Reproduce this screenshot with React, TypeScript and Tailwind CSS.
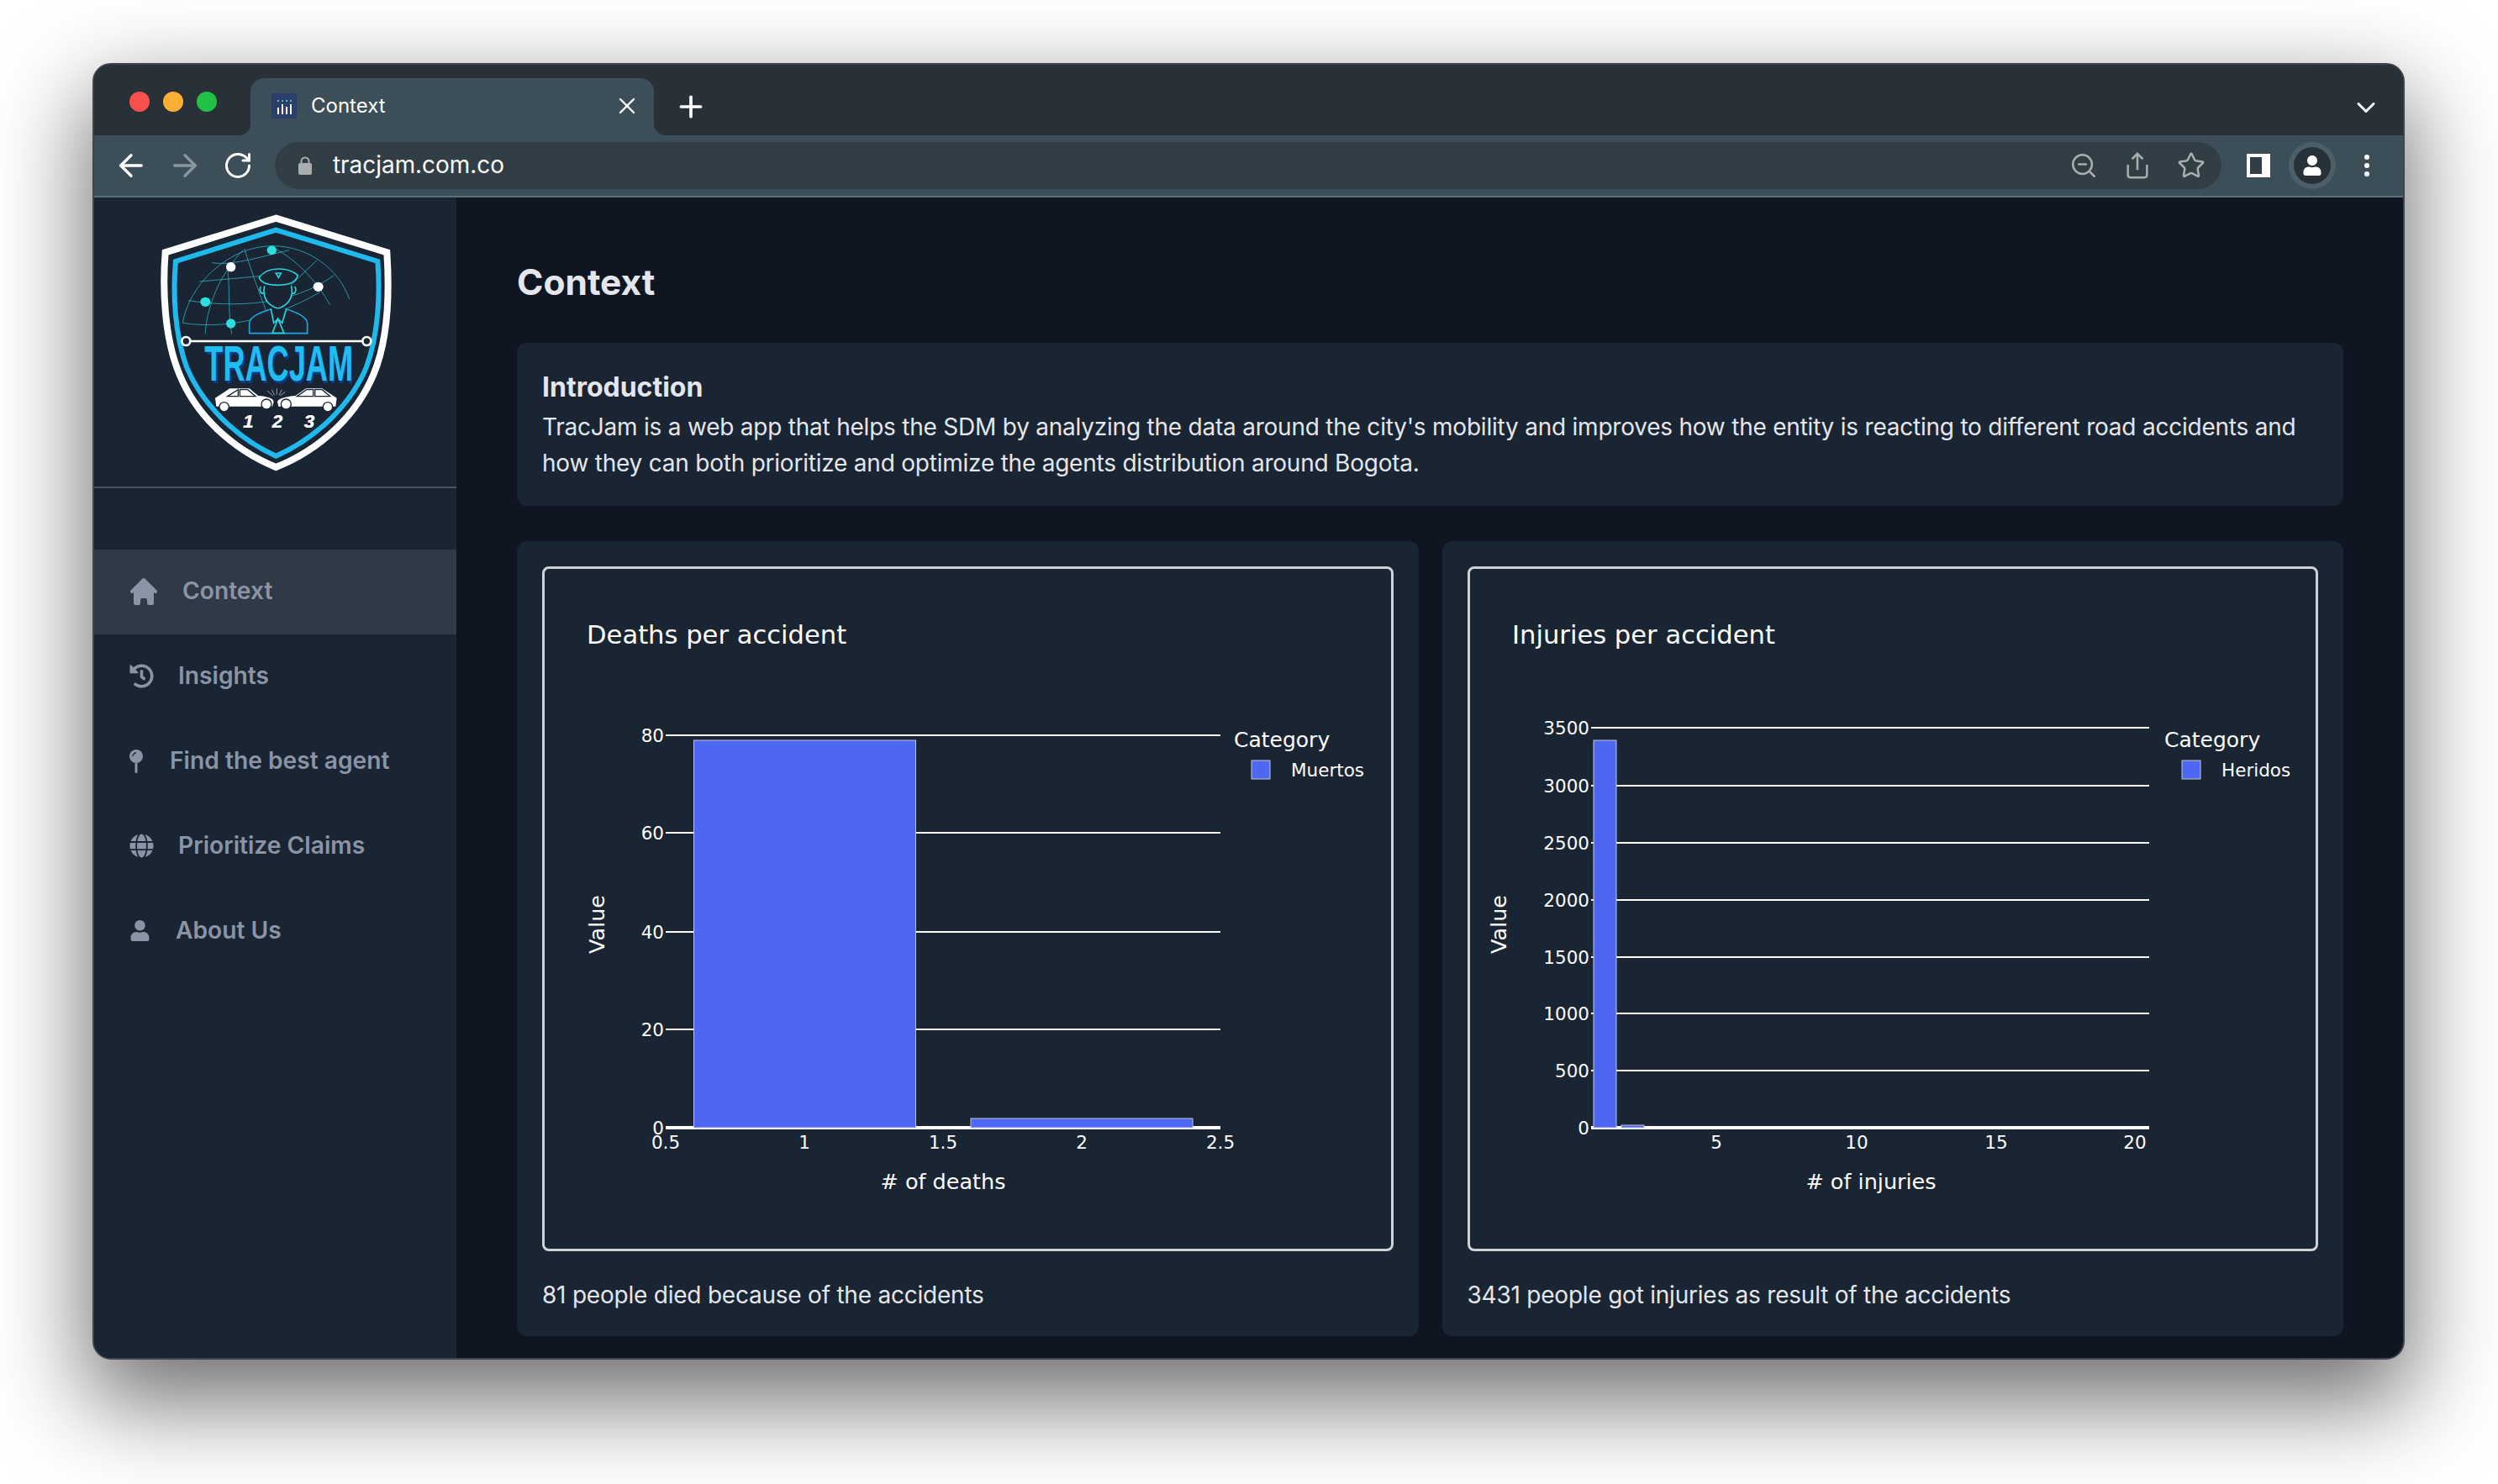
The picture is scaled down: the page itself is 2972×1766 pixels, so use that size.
import { ArrowLeft, ArrowRight, ChevronDown, Plus, RotateCw, Share, Star, X, ZoomOut } from 'lucide-react'
import { FaGlobe, FaHistory, FaUser } from 'react-icons/fa'
import { HiHome } from 'react-icons/hi'
import type { ReactNode } from 'react'

type Tick = { label: string; at: number }
type Bar = { x: number; width: number; top: number }

type ChartProps = {
  title: string
  xTitle: string
  xTitleAt: number
  valueAt: number
  plotLeft: number
  plotRight: number
  yTicks: Tick[]
  xTicks: Tick[]
  bars: Bar[]
  legendAt: number
  series: string
}

const AXIS_Y = 668

const Favicon = () => (
  <svg width="30" height="30" viewBox="0 0 30 30" className="shrink-0">
    <rect width="30" height="30" fill="#2a3f6a" />
    <g fill="#4fc3c8">
      <rect x="7" y="8" width="2" height="2" />
      <rect x="12" y="8" width="2" height="2" />
      <rect x="17" y="8" width="2" height="2" />
      <rect x="22" y="8" width="2" height="2" />
    </g>
    <g fill="#ffffff">
      <rect x="7" y="17" width="2" height="8" />
      <rect x="12" y="13" width="2" height="12" />
      <rect x="17" y="16" width="2" height="9" />
      <rect x="22" y="13" width="2" height="12" />
    </g>
  </svg>
)

const TabFlare = ({ flip }: { flip?: boolean }) => (
  <svg width="14" height="14" viewBox="0 0 14 14" className={flip ? 'absolute bottom-0 right-[-14px] -scale-x-100' : 'absolute bottom-0 left-[-14px]'}>
    <path d="M14 0V14H0C8 14 14 8 14 0Z" fill="#3c4e57" />
  </svg>
)

const Lock = () => (
  <svg width="16" height="22" viewBox="0 0 16 22" className="shrink-0">
    <path d="M3.5 9V6a4.5 4.5 0 0 1 9 0v3" fill="none" stroke="#a9adb0" strokeWidth="2" />
    <rect x="0" y="8" width="16" height="14" rx="2" fill="#a9adb0" />
  </svg>
)

const Pin = () => (
  <svg width="16" height="28" viewBox="0 0 16 28" fill="#8a94a4" className="shrink-0">
    <circle cx="8" cy="8" r="8" />
    <rect x="6.5" y="16" width="3" height="12" rx="1" />
    <path d="M4 8a4 4 0 0 1 4-4" fill="none" stroke="#1a2533" strokeWidth="1.4" />
  </svg>
)

const Logo = () => (
  <svg width="340" height="340" viewBox="-8 0 1020 1020" className="shrink-0">
    <path d="M503 56L899 178C907 300 907 480 852 612C790 762 660 882 503 945C350 882 218 762 158 612C103 480 98 300 108 178Z" fill="none" stroke="#ffffff" strokeWidth="24" />
    <path d="M503 98L866 210C875 320 870 470 825 590C770 720 650 840 503 905C360 840 240 720 185 590C140 470 135 320 145 210Z" fill="none" stroke="#1fb9ee" strokeWidth="18" />
    <g fill="none" stroke="#2bc4d0" strokeWidth="2.5" opacity="0.85">
      <path d="M170 430C190 300 330 155 490 155C620 155 730 240 765 345" />
      <path d="M190 350C350 375 560 370 710 260" />
      <path d="M170 430C300 450 470 430 660 320" />
      <path d="M230 282C340 272 450 265 540 250" />
      <path d="M275 215C340 225 430 200 550 170" />
      <path d="M390 165C420 260 450 340 480 420" />
      <path d="M385 170C320 240 260 340 250 470" />
      <path d="M500 165C570 200 650 280 695 365" />
      <path d="M330 240C340 300 330 380 345 470" />
      <path d="M650 205L520 330" />
    </g>
    <g fill="#2cdee0">
      <ellipse cx="488" cy="170" rx="17" ry="16" />
      <ellipse cx="251" cy="355" rx="18" ry="17" />
      <ellipse cx="342" cy="432" rx="17" ry="17" />
    </g>
    <g fill="#ffffff">
      <ellipse cx="342" cy="230" rx="17" ry="17" />
      <ellipse cx="654" cy="301" rx="18" ry="17" />
    </g>
    <g fill="#1a2533" stroke="#26d4dc" strokeWidth="5">
      <path d="M462 298C455 330 465 365 510 378C555 365 565 330 558 298" />
      <path d="M448 300C442 312 448 325 458 325M570 300C578 312 572 325 562 325" fill="none" />
      <path d="M443 268C470 228 545 228 581 260C575 285 552 295 510 295C475 295 450 288 443 268Z" />
      <path d="M503 252L521 252L512 268Z" fill="none" />
      <path d="M408 467V430C412 405 450 392 485 380L510 415L540 380C575 392 610 405 615 430V467Z" stroke="#1fa6e0" />
      <path d="M485 380L495 430L510 415L525 430L540 380M510 415L490 466H532Z" />
    </g>
    <path d="M182 495H827" stroke="#ffffff" strokeWidth="8" />
    <circle cx="182" cy="495" r="15" fill="#1a2533" stroke="#ffffff" strokeWidth="8" />
    <circle cx="827" cy="495" r="15" fill="#1a2533" stroke="#ffffff" strokeWidth="8" />
    <text x="256" y="644" textLength="526" lengthAdjust="spacingAndGlyphs" fontFamily="'Liberation Sans', sans-serif" fontWeight="700" fontSize="176" fill="#0a3a8c">TRACJAM</text>
    <text x="248" y="636" textLength="530" lengthAdjust="spacingAndGlyphs" fontFamily="'Liberation Sans', sans-serif" fontWeight="700" fontSize="176" fill="#20bdf0">TRACJAM</text>
    <g fill="#ffffff">
      <path d="M286 698L338 664H408L440 690C470 692 495 698 495 712L490 728H290Z" />
      <path d="M720 698L668 664H610L572 690C545 692 510 698 508 712L512 728H716Z" />
      <circle cx="318" cy="730" r="17" stroke="#1a2533" strokeWidth="4" />
      <circle cx="469" cy="720" r="18" stroke="#1a2533" strokeWidth="4" />
      <circle cx="539" cy="720" r="18" stroke="#1a2533" strokeWidth="4" />
      <circle cx="688" cy="730" r="17" stroke="#1a2533" strokeWidth="4" />
    </g>
    <g fill="none" stroke="#1a2533" strokeWidth="4">
      <path d="M330 692L368 668V692ZM374 668H402L430 692H374Z" />
      <path d="M578 692L612 668H636V692ZM642 668H668L696 692H642Z" />
    </g>
    <path d="M472 672L492 690M488 668L498 688M506 664V686M524 668L514 688M536 676L518 690" stroke="#d8dde2" strokeWidth="2" />
    {[
      { label: '1', x: 404 },
      { label: '2', x: 508 },
      { label: '3', x: 622 },
    ].map((n) => (
      <g key={n.label} fontFamily="'Liberation Sans', sans-serif" fontWeight="700" fontStyle="italic" fontSize="66" textAnchor="middle">
        <text x={n.x - 2} y={804} fill="#ff2f55">{n.label}</text>
        <text x={n.x + 2} y={804} fill="#2cdee0">{n.label}</text>
        <text x={n.x} y={804} fill="#ffffff">{n.label}</text>
      </g>
    ))}
  </svg>
)

const Chart = ({ title, xTitle, xTitleAt, valueAt, plotLeft, plotRight, yTicks, xTicks, bars, legendAt, series }: ChartProps) => (
  <div className="h-[815px] overflow-hidden rounded-lg border-[3px] border-[#d0d3d6]">
    <svg width="1006" height="809" viewBox="3 3 1006 809" fontFamily="'DejaVu Sans', sans-serif" fill="#ffffff">
      <text x="53" y="92" fontSize="30.6">{title}</text>
      {yTicks.map((t) => (
        <g key={t.label}>
          <line x1={plotLeft} x2={plotRight} y1={t.at} y2={t.at} stroke="#ffffff" strokeWidth={t.at === AXIS_Y ? 4 : 2} />
          <text x={plotLeft - 2} y={t.at + 8} fontSize="21.5" textAnchor="end">{t.label}</text>
        </g>
      ))}
      {bars.map((b) => (
        <rect key={b.x} x={b.x} y={b.top} width={b.width} height={AXIS_Y - b.top} fill="#4d66f4" stroke="#c4c8d4" strokeWidth="1" />
      ))}
      {xTicks.map((t) => (
        <text key={t.label} x={t.at} y={693} fontSize="21.5" textAnchor="middle">{t.label}</text>
      ))}
      <text x={xTitleAt} y={741} fontSize="25.5" textAnchor="middle">{xTitle}</text>
      <text x={valueAt} y={426} fontSize="25.5" textAnchor="middle" dominantBaseline="central" transform={`rotate(-90 ${valueAt} 426)`}>Value</text>
      <text x={legendAt} y={215} fontSize="25">{'Category'}</text>
      <rect x={legendAt + 21} y={231} width="22" height="22" fill="#4d66f4" stroke="#c4c8d4" strokeWidth="1" />
      <text x={legendAt + 68} y={250} fontSize="21.5">{series}</text>
    </svg>
  </div>
)

const navItems: { label: string; icon: ReactNode; gap: string; active?: boolean }[] = [
  { label: 'Context', icon: <HiHome className="size-[40px] -ml-[3px] -mr-[2px]" />, gap: 'gap-[28px]', active: true },
  { label: 'Insights', icon: <FaHistory className="size-[29px]" />, gap: 'gap-[29px]' },
  { label: 'Find the best agent', icon: <Pin />, gap: 'gap-[32px]' },
  { label: 'Prioritize Claims', icon: <FaGlobe className="size-[29px]" />, gap: 'gap-[29px]' },
  { label: 'About Us', icon: <FaUser className="size-[25px]" />, gap: 'gap-[30px]' },
]

const deaths: ChartProps = {
  title: 'Deaths per accident',
  xTitle: '# of deaths',
  xTitleAt: 477,
  valueAt: 65,
  plotLeft: 147,
  plotRight: 807,
  yTicks: [
    { label: '80', at: 201 },
    { label: '60', at: 317 },
    { label: '40', at: 435 },
    { label: '20', at: 551 },
    { label: '0', at: AXIS_Y },
  ],
  xTicks: [
    { label: '0.5', at: 147 },
    { label: '1', at: 312 },
    { label: '1.5', at: 477 },
    { label: '2', at: 642 },
    { label: '2.5', at: 807 },
  ],
  bars: [
    { x: 180.5, width: 264, top: 207 },
    { x: 510, width: 264, top: 657 },
  ],
  legendAt: 823,
  series: 'Muertos',
}

const injuries: ChartProps = {
  title: 'Injuries per accident',
  xTitle: '# of injuries',
  xTitleAt: 480,
  valueAt: 37,
  plotLeft: 147,
  plotRight: 811,
  yTicks: [
    { label: '3500', at: 192 },
    { label: '3000', at: 261 },
    { label: '2500', at: 329 },
    { label: '2000', at: 397 },
    { label: '1500', at: 465 },
    { label: '1000', at: 532 },
    { label: '500', at: 600 },
    { label: '0', at: AXIS_Y },
  ],
  xTicks: [
    { label: '5', at: 296 },
    { label: '10', at: 463 },
    { label: '15', at: 629 },
    { label: '20', at: 794 },
  ],
  bars: [
    { x: 150, width: 27, top: 207 },
    { x: 183, width: 27, top: 665 },
  ],
  legendAt: 829,
  series: 'Heridos',
}

export default function App() {
  return (
    <div className="h-[1766px] w-[2972px] overflow-hidden bg-white pl-[110px] pt-[75px] font-['Inter',sans-serif]">
      <div className="flex h-[1543px] w-[2751px] flex-col overflow-hidden rounded-[22px] border-2 border-[#3f4650] bg-[#0f1622] shadow-[0_44px_110px_8px_rgba(0,0,0,0.56)]">
        {/* tab strip */}
        <div className="flex h-[84px] shrink-0 items-end bg-[#273137] pl-[42px] pr-[26px]">
          <div className="flex w-[104px] items-center gap-[16px] self-start pt-[32px]">
            <span className="size-[24px] rounded-full bg-[#fb4f4f]" />
            <span className="size-[24px] rounded-full bg-[#fdae36]" />
            <span className="size-[24px] rounded-full bg-[#1fc244]" />
          </div>
          <div className="relative ml-[40px] flex h-[68px] w-[480px] items-center rounded-t-[16px] bg-[#3c4e57] pl-[25px] pr-[16px] pb-[2px] text-white">
            <TabFlare />
            <Favicon />
            <span className="ml-[17px] flex-1 text-[24px]">Context</span>
            <X className="size-[32px]" strokeWidth={1.8} />
            <TabFlare flip />
          </div>
          <Plus className="mb-[14px] ml-[24px] size-[40px] text-white" strokeWidth={2.2} />
          <ChevronDown className="mb-[15px] ml-auto size-[36px] text-white" strokeWidth={2} />
        </div>
        {/* toolbar */}
        <div className="flex h-[74px] shrink-0 items-center border-b-2 border-[#5d6f78] bg-[#3c4e57] pl-[23px] pr-[30px] text-white">
          <ArrowLeft className="size-[42px]" strokeWidth={1.9} />
          <ArrowRight className="ml-[22px] size-[42px] text-[#8b979e]" strokeWidth={1.9} />
          <RotateCw className="ml-[24px] size-[36px]" strokeWidth={2} />
          <div className="ml-[26px] flex h-[56px] w-[2316px] items-center rounded-full bg-[#323e45] pl-[28px] pr-[19px]">
            <Lock />
            <span className="ml-[25px] text-[27.9px] leading-none">tracjam.com.co</span>
            <div className="ml-auto flex items-center gap-[30px] text-[#a9adb0]">
              <ZoomOut className="size-[34px]" strokeWidth={1.8} />
              <Share className="size-[34px]" strokeWidth={1.8} />
              <Star className="size-[34px]" strokeWidth={1.8} />
            </div>
          </div>
          <div className="ml-[30px] flex h-[28px] w-[28px] justify-start border-[4px] border-r-[10px] border-white">
            <span className="block h-full w-full bg-[#323e45]" />
          </div>
          <div className="ml-[22px] flex size-[56px] items-center justify-center rounded-full bg-[#4c5e68]">
            <div className="flex size-[44px] items-center justify-center rounded-full bg-[#273137]">
              <FaUser className="size-[24px]" />
            </div>
          </div>
          <div className="ml-[34px] flex flex-col gap-[4px]">
            <span className="size-[6px] rounded-full bg-white" />
            <span className="size-[6px] rounded-full bg-white" />
            <span className="size-[6px] rounded-full bg-white" />
          </div>
        </div>
        {/* page */}
        <div className="flex min-h-0 flex-1">
          <aside className="w-[431px] shrink-0 bg-[#1a2533]">
            <div className="flex h-[346px] justify-center border-b-2 border-[#4a5361] pt-[6px]">
              <Logo />
            </div>
            <nav className="mt-[73px] flex flex-col text-[#8a94a4]">
              {navItems.map((item) => (
                <div
                  key={item.label}
                  className={`flex h-[101px] items-center pb-[2px] pl-[42px] text-[28.2px] font-semibold ${item.gap} ${item.active ? 'bg-[#303a47]' : ''}`}
                >
                  {item.icon}
                  <span>{item.label}</span>
                </div>
              ))}
            </nav>
          </aside>
          <main className="min-w-0 flex-1 pl-[72px] pr-[71px] text-[#e3e6ec]">
            <h1 className="flex h-[173px] items-center pt-[28px] text-[42.5px] font-bold">Context</h1>
            <section className="rounded-[12px] bg-[#1a2533] px-[30px] pb-[29px] pt-[28px] text-[28px] leading-[43px] tracking-[-0.008em]">
              <h2 className="text-[32px] font-bold leading-[49px] tracking-normal">Introduction</h2>
              <p className="mt-[2px]">
                TracJam is a web app that helps the SDM by analyzing the data around the city's mobility and improves how the entity is reacting to different road accidents and how they can both prioritize and optimize the agents distribution around Bogota.
              </p>
            </section>
            <div className="mt-[42px] grid grid-cols-2 gap-[28px]">
              <section className="h-[946px] rounded-[12px] bg-[#1a2533] p-[30px]">
                <Chart {...deaths} />
                <p className="mt-[31px] text-[28px] leading-[43px] tracking-[-0.008em]">81 people died because of the accidents</p>
              </section>
              <section className="h-[946px] rounded-[12px] bg-[#1a2533] p-[30px]">
                <Chart {...injuries} />
                <p className="mt-[31px] text-[28px] leading-[43px] tracking-[-0.008em]">3431 people got injuries as result of the accidents</p>
              </section>
            </div>
          </main>
        </div>
      </div>
    </div>
  )
}
